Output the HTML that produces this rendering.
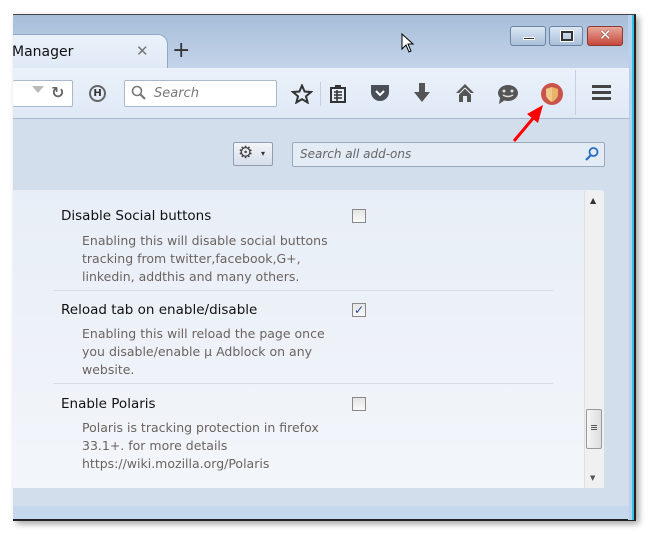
<!DOCTYPE html>
<html><head><meta charset="utf-8"><style>
*{margin:0;padding:0;box-sizing:border-box}
body{width:650px;height:534px;background:#fff;position:relative;overflow:hidden;font-family:"DejaVu Sans","Liberation Sans",sans-serif}
.abs{position:absolute}
#win{left:13px;top:14px;width:623px;height:507px;background:#b8cce4;border-top:1px solid #444;border-right:2px solid #222;border-bottom:2px solid #222;box-shadow:3px 3px 6px rgba(0,0,0,.35)}
.title{left:13px;top:15px;width:618px;height:53px;background:linear-gradient(#a7bdd8,#c3d4ea)}
.tab{left:13px;top:34px;width:155px;height:36px;background:linear-gradient(#eaf1fa,#dfe9f6);border:1px solid #8fa7c4;border-left:none;border-bottom:none;border-radius:0 10px 0 0}
.toolbar{left:13px;top:68px;width:616px;height:51px;background:linear-gradient(#eaf1fa,#dfe9f6);border-bottom:1px solid #a8b9cf}
.content{left:13px;top:119px;width:616px;height:387px;background:#d3deec}
.bottom{left:13px;top:506px;width:616px;height:13px;background:#c6d8ee}
.rframe{left:628px;top:15px;width:5px;height:505px;background:#b9d1ec}
.cyan{left:632px;top:15px;width:2px;height:505px;background:#39c0e8}
.box{background:#fff;border:1px solid #a9b8cc;border-radius:2px}
.panel{left:13px;top:190px;width:591px;height:298px;background:linear-gradient(#e8eef7,#f3f6fa);border-radius:0 3px 3px 0}
.h{font-size:13.5px;color:#111;left:61px}
.d{font-size:12.5px;color:#6b6360;left:82px;line-height:18px}
.cb{left:352px;width:14px;height:14px;border:1px solid #888;background:linear-gradient(#e4e4e4,#fafafa)}
.sep{left:43px;width:402px;height:1px;background:#d6dde6}
.wb{top:26px;height:20px;border:1px solid #6c84a3;border-radius:3px;background:linear-gradient(#dbe6f3,#a9bfd9)}
</style></head><body>
<div id="win" class="abs"></div>
<div class="abs title"></div>
<div class="abs rframe"></div><div class="abs cyan"></div>
<div class="abs tab"></div>
<div class="abs" style="left:12px;top:44px;font-size:14px;color:#111">Manager</div>
<div class="abs" style="left:136px;top:42px;font-size:15px;color:#777">✕</div>
<div class="abs" style="left:172px;top:38px;font-size:22px;color:#333">+</div>
<svg class="abs" style="left:401px;top:33px" width="16" height="22"><path d="M1 1 L1 16 L5 12 L8 19 L10 18 L7 11 L12 11 Z" fill="#fff" stroke="#000"/></svg>
<div class="abs wb" style="left:510px;width:36px"><div class="abs" style="left:12px;top:10px;width:12px;height:3px;background:#333;border:1px solid #fff"></div></div>
<div class="abs wb" style="left:549px;width:34px"><div class="abs" style="left:11px;top:4px;width:12px;height:10px;border:2px solid #333;outline:1px solid #fff"></div></div>
<div class="abs wb" style="left:587px;width:36px;background:linear-gradient(#e9a79b,#c6473a);border-color:#8a3a33"><div class="abs" style="left:11px;top:-1px;color:#fff;font-weight:bold;font-size:15px;text-shadow:0 0 1px #000">✕</div></div>
<div class="abs toolbar"></div>
<div class="abs box" style="left:13px;top:80px;width:60px;height:27px;border-left:none"></div>
<div class="abs" style="left:32px;top:86px;width:0;height:0;border-left:6px solid transparent;border-right:6px solid transparent;border-top:7px solid #bbb"></div>
<div class="abs" style="left:51px;top:83px;font-size:16px;color:#666;font-weight:bold">↻</div>
<div class="abs" style="left:89px;top:85px;width:17px;height:17px;border:2px solid #666;border-radius:50%;font-size:10px;font-weight:bold;text-align:center;line-height:13px;color:#333">H</div>
<div class="abs box" style="left:124px;top:80px;width:153px;height:27px"></div>
<svg class="abs" style="left:131px;top:85px" width="16" height="16"><circle cx="6" cy="6" r="4.5" fill="none" stroke="#777" stroke-width="1.6"/><path d="M9 9 L14 14" stroke="#777" stroke-width="2.2"/></svg>
<div class="abs" style="left:154px;top:86px;font-size:13px;font-style:italic;color:#777">Search</div>
<svg class="abs" style="left:291px;top:84px" width="22" height="20"><path d="M11 1.5 L13.6 7.5 L20 8 L15 12.3 L16.6 18.5 L11 15.2 L5.4 18.5 L7 12.3 L2 8 L8.4 7.5 Z" fill="none" stroke="#333" stroke-width="2"/></svg>
<div class="abs" style="left:320px;top:82px;width:1px;height:24px;background:#c5d0de"></div>
<svg class="abs" style="left:329px;top:84px" width="18" height="20"><rect x="2" y="4" width="14" height="14" fill="none" stroke="#333" stroke-width="2"/><rect x="6" y="1" width="6" height="4" fill="#333"/><path d="M5 8H13M5 11H13M5 14H13M8 6V17" stroke="#333" stroke-width="1.5"/></svg>
<svg class="abs" style="left:370px;top:84px" width="20" height="18"><path d="M1 1H19V8A9 9 0 0 1 1 8Z" fill="#4a4f57"/><path d="M6 7L10 11L14 7" stroke="#fff" stroke-width="2" fill="none"/></svg>
<svg class="abs" style="left:413px;top:82px" width="18" height="22"><path d="M6 1H12V10H17L9 20L1 10H6Z" fill="#555"/></svg>
<svg class="abs" style="left:455px;top:83px" width="20" height="20"><path d="M10 1L1 10H4V19H8V13H12V19H16V10H19Z" fill="#555"/><path d="M10 5L3 12M10 5L17 12" stroke="#eaf1fa" stroke-width="1"/></svg>
<svg class="abs" style="left:497px;top:83px" width="22" height="22"><ellipse cx="11" cy="10" rx="10" ry="8" fill="#555"/><path d="M3 15L2 21L8 17Z" fill="#555"/><circle cx="7" cy="8" r="1.5" fill="#ddd"/><circle cx="15" cy="8" r="1.5" fill="#ddd"/><path d="M6 12Q11 15 16 12" stroke="#ddd" stroke-width="1.5" fill="none"/></svg>
<svg class="abs" style="left:540px;top:82px" width="24" height="24"><circle cx="12" cy="12" r="11" fill="#c9544a"/><path d="M12 5L18 7V12Q18 17 12 20Q6 17 6 12V7Z" fill="#e8b46a"/><path d="M12 5L6 7V12Q6 17 12 20Z" fill="#f0c88a"/></svg>
<div class="abs" style="left:575px;top:70px;width:1px;height:45px;background:#c5d0de"></div>
<div class="abs" style="left:592px;top:85px;width:19px;height:3px;background:#444;box-shadow:0 6px 0 #444,0 12px 0 #444"></div>
<svg class="abs" style="left:505px;top:98px;z-index:5" width="45" height="50"><path d="M9 43L30 18" stroke="#f00" stroke-width="3"/><path d="M38 7L22 16L33 25Z" fill="#f00"/></svg>
<div class="abs content"></div>
<div class="abs bottom"></div>
<div class="abs" style="left:233px;top:142px;width:40px;height:24px;border:1px solid #8e9fb5;border-radius:2px;background:linear-gradient(#f2f5f9,#d7dfea)"></div>
<div class="abs" style="left:238px;top:143px;font-size:17px;color:#444">⚙</div>
<div class="abs" style="left:261px;top:149px;font-size:8px;color:#333">▾</div>
<div class="abs" style="left:292px;top:142px;width:313px;height:25px;border:1px solid #9aa9bd;border-radius:2px;background:#e3ebf5"></div>
<div class="abs" style="left:300px;top:147px;font-size:12px;font-style:italic;color:#666">Search all add-ons</div>
<svg class="abs" style="left:584px;top:146px" width="16" height="16"><circle cx="9.5" cy="6" r="4" fill="none" stroke="#2a6cc4" stroke-width="1.8"/><path d="M7 9L2 14" stroke="#2a6cc4" stroke-width="2.2"/></svg>
<div class="abs panel"></div>
<div class="abs" style="left:584px;top:191px;width:20px;height:297px;background:#f0f0f0;border-left:1px solid #e0e0e0"></div>
<div class="abs" style="left:590px;top:196px;font-size:8px;color:#333">▲</div>
<div class="abs" style="left:590px;top:474px;font-size:7px;color:#555">▼</div>
<div class="abs" style="left:586px;top:409px;width:16px;height:40px;border:1px solid #999;border-radius:2px;background:linear-gradient(90deg,#f5f5f5,#ddd)"></div>
<div class="abs" style="left:591px;top:425px;width:6px;height:1px;background:#555;box-shadow:0 2px 0 #555,0 4px 0 #555"></div>
<div class="abs h" style="top:208px">Disable Social buttons</div>
<div class="abs cb" style="top:209px"></div>
<div class="abs d" style="top:232px">Enabling this will disable social buttons<br>tracking from twitter,facebook,G+,<br>linkedin, addthis and many others.</div>
<div class="abs sep" style="top:290px;left:53px;width:500px"></div>
<div class="abs h" style="top:302px">Reload tab on enable/disable</div>
<div class="abs cb" style="top:303px;color:#1a4e9c;font-size:12px;line-height:12px;text-align:center">✓</div>
<div class="abs d" style="top:325px">Enabling this will reload the page once<br>you disable/enable µ Adblock on any<br>website.</div>
<div class="abs sep" style="top:383px;left:53px;width:500px"></div>
<div class="abs h" style="top:396px">Enable Polaris</div>
<div class="abs cb" style="top:397px"></div>
<div class="abs d" style="top:419px">Polaris is tracking protection in firefox<br>33.1+. for more details<br>https://wiki.mozilla.org/Polaris</div>
</body></html>
